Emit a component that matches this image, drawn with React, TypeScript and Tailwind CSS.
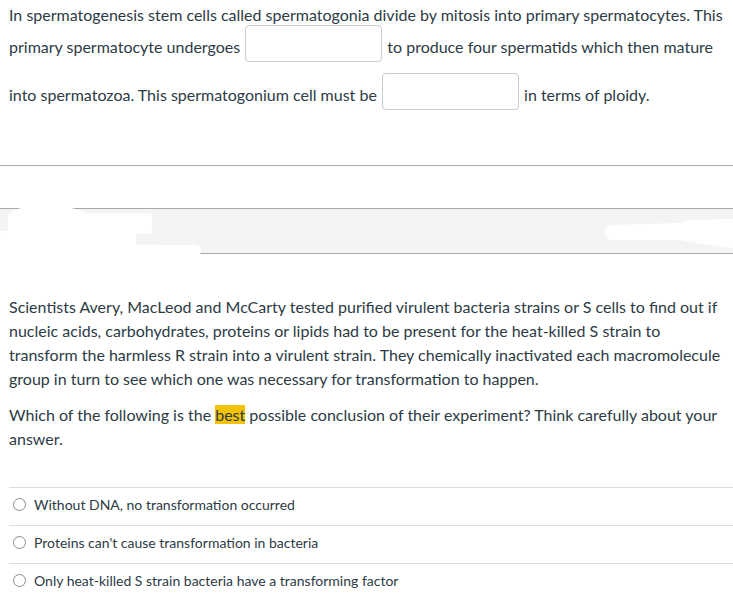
import { useState } from 'react';

const options = [
  'Without DNA, no transformation occurred',
  "Proteins can't cause transformation in bacteria",
  'Only heat-killed S strain bacteria have a transforming factor',
];

function Blank() {
  return (
    <span className="mx-[1px] mb-[13px] mt-[-2px] inline-block h-[37px] w-[137px] rounded-[4px] border border-[#c7cdd1] bg-white align-[-22px]" />
  );
}

function Redacted() {
  // white scribbles painted over the gray band in the original capture
  return (
    <svg
      className="pointer-events-none absolute left-0 top-[-4px]"
      width="733"
      height="52"
      viewBox="0 204 733 52"
    >
      <g fill="#ffffff">
        <path d="M10,214 C14,206 30,205 45,205 C62,205 76,206 84,212 L84,216 L10,216 Z" />
        <rect x="8" y="212" width="144" height="21" rx="4" />
        <rect x="0" y="230" width="136" height="22" rx="3" />
        <path d="M40,243 L196,244 C203,245 203,254 196,255 L0,255 L0,249 Z" />
        <path d="M612,224 L680,222 L690,219 L733,218 L733,247 L702,243 L680,239 L612,239 A7.5,7.5 0 0 1 612,224 Z" />
      </g>
    </svg>
  );
}

export default function App() {
  const [picked, setPicked] = useState<number | null>(null);

  return (
    <div className="h-[611px] w-[733px] overflow-hidden bg-white font-['Lato',_'Noto_Sans',_sans-serif] text-[#2d3b45]">
      <p className="px-[9px] pt-[3px] text-[16px] leading-[24px]">
        In spermatogenesis stem cells called spermatogonia divide by mitosis into primary
        spermatocytes. This primary spermatocyte undergoes <Blank /> to produce four
        spermatids which then mature into spermatozoa. This spermatogonium cell must be{' '}
        <Blank /> in terms of ploidy.
      </p>

      <div className="mt-[42px] h-px bg-[#aaaaaa]" />

      <div className="relative mt-[42px] h-[46px] border-y border-[#aaaaaa] bg-[#f4f4f4]">
        <Redacted />
      </div>

      <div className="mt-[41px] px-[9px] text-[16px] leading-[24px]">
        <p>
          Scientists Avery, MacLeod and McCarty tested purified virulent bacteria strains or S
          cells to find out if nucleic acids, carbohydrates, proteins or lipids had to be
          present for the heat-killed S strain to transform the harmless R strain into a
          virulent strain. They chemically inactivated each macromolecule group in turn to see
          which one was necessary for transformation to happen.
        </p>
        <p className="mt-[12px]">
          Which of the following is the <span className="bg-[#f4c300]">best</span> possible
          conclusion of their experiment? Think carefully about your answer.
        </p>
      </div>

      <ul className="ml-[9px] mt-[36px]">
        {options.map((o, i) => (
          <li
            key={o}
            onClick={() => setPicked(i)}
            className="flex h-[38px] items-center gap-[8px] border-t border-[#dddddd] pb-[5px] pl-[4px] text-[14px]"
          >
            <span
              className={
                picked === i
                  ? 'h-[13px] w-[13px] rounded-full border-[4px] border-[#0770a3]'
                  : 'h-[13px] w-[13px] rounded-full border border-[#8a8a8a]'
              }
            />
            {o}
          </li>
        ))}
      </ul>
    </div>
  );
}
